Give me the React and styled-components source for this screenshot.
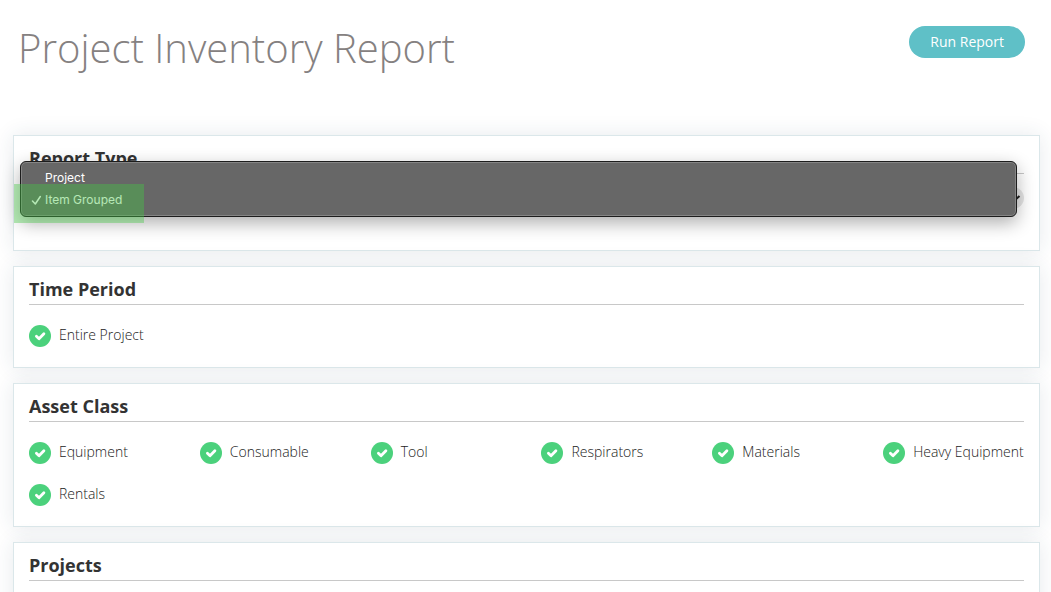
import React, { useState } from 'react';
import styled, { createGlobalStyle } from 'styled-components';

const reportTypes = ['Project', 'Item Grouped'];

const assetClasses = [
  'Equipment',
  'Consumable',
  'Tool',
  'Respirators',
  'Materials',
  'Heavy Equipment',
  'Rentals',
];

const CheckOption = ({ label }) => {
  const [checked, setChecked] = useState(true);

  return (
    <OptionLabel>
      <CheckCircle $checked={checked}>
        <CheckInput
          type="checkbox"
          checked={checked}
          onChange={(e) => setChecked(e.target.checked)}
        />
        <svg width="22" height="22" viewBox="0 0 22 22" fill="none" aria-hidden="true">
          <path
            d="M7.4 11.3L10 13.8L14.9 8.7"
            stroke="#fff"
            strokeWidth="2.8"
            strokeLinecap="round"
            strokeLinejoin="round"
          />
        </svg>
      </CheckCircle>
      <OptionText>{label}</OptionText>
    </OptionLabel>
  );
};

const App = () => {
  const [reportType, setReportType] = useState('Item Grouped');

  return (
    <>
      <GlobalStyle />
      <Page>
        <Header>
          <Title>Project Inventory Report</Title>
          <RunButton type="button">Run Report</RunButton>
        </Header>

        <Cards>
          <Card>
            <CardTitle id="report-type">Report Type</CardTitle>
            <SelectRow>
              <TypeSelect
                aria-labelledby="report-type"
                value={reportType}
                onChange={(e) => setReportType(e.target.value)}
              >
                {reportTypes.map((type) => (
                  <option key={type}>{type}</option>
                ))}
              </TypeSelect>
              <Arrow>
                <svg width="22" height="22" viewBox="0 0 22 22" fill="none" aria-hidden="true">
                  <path d="M7 9.5L12 14L17.5 9" stroke="#222" strokeWidth="2" />
                </svg>
              </Arrow>
            </SelectRow>
            <Menu role="listbox" aria-labelledby="report-type">
              {reportTypes.map((type) => (
                <MenuItem
                  key={type}
                  role="option"
                  aria-selected={type === reportType}
                  onClick={() => setReportType(type)}
                >
                  <MenuMark>
                    {type === reportType && (
                      <svg width="11" height="12" viewBox="0 0 11 12" fill="none" aria-hidden="true">
                        <path
                          d="M1.5 8L4.3 11L9.3 3.5"
                          stroke="#fff"
                          strokeWidth="1.5"
                          strokeLinecap="round"
                          strokeLinejoin="round"
                        />
                      </svg>
                    )}
                  </MenuMark>
                  {type}
                </MenuItem>
              ))}
            </Menu>
            <Highlight />
          </Card>

          <Card>
            <CardTitle>Time Period</CardTitle>
            <Options>
              <CheckOption label="Entire Project" />
            </Options>
          </Card>

          <Card>
            <CardTitle>Asset Class</CardTitle>
            <Options>
              {assetClasses.map((name) => (
                <CheckOption key={name} label={name} />
              ))}
            </Options>
          </Card>

          <Card>
            <CardTitle>Projects</CardTitle>
            <Options />
          </Card>
        </Cards>
      </Page>
    </>
  );
};

const GlobalStyle = createGlobalStyle`
  * {
    box-sizing: border-box;
  }

  body {
    margin: 0;
    background: #fff;
    font-family: 'Open Sans', sans-serif;
    color: #333;
  }
`;

const Page = styled.main`
  height: 100vh;
  overflow: hidden;
`;

const Header = styled.header`
  display: flex;
  justify-content: space-between;
  align-items: flex-start;
  padding: 20px 26px 59px 18px;
`;

const Title = styled.h1`
  margin: 0;
  font-size: 40px;
  line-height: 56px;
  font-weight: 300;
  color: #858181;
`;

const RunButton = styled.button`
  height: 32px;
  margin-top: 6px;
  padding: 0 21px 2px;
  border: 0;
  border-radius: 16px;
  background: #5fc0c7;
  color: #fff;
  font-family: inherit;
  font-size: 14px;
  font-weight: 500;
  cursor: pointer;
`;

const Cards = styled.div`
  display: flex;
  flex-direction: column;
  gap: 15px;
  padding: 0 11px 0 13px;
`;

const Card = styled.section`
  position: relative;
  padding: 0 15px;
  border: 1px solid #dbe7ea;
  background: #fff;
  box-shadow: 0 0 20px rgba(40, 60, 90, 0.11);
`;

const CardTitle = styled.h2`
  margin: 0;
  padding: 10px 0 3px;
  border-bottom: 1px solid #c8c8c8;
  font-size: 18px;
  line-height: 24px;
  font-weight: 700;
`;

const Options = styled.div`
  display: grid;
  grid-template-columns: repeat(6, 1fr);
  column-gap: 30px;
  min-height: 62px;
  padding: 10px 0;
`;

const OptionLabel = styled.label`
  display: flex;
  align-items: center;
  gap: 8px;
  height: 42px;
  cursor: pointer;
`;

const OptionText = styled.span`
  padding-bottom: 2px;
  font-size: 14px;
  font-weight: 300;
  line-height: 20px;
  white-space: nowrap;
  color: #222;
`;

const CheckCircle = styled.span`
  display: grid;
  flex: none;
  width: 22px;
  height: 22px;
  border-radius: 50%;
  background: ${({ $checked }) => ($checked ? '#4bd17c' : '#d5d5d5')};

  > * {
    grid-area: 1 / 1;
  }
`;

const CheckInput = styled.input`
  appearance: none;
  width: 22px;
  height: 22px;
  margin: 0;
  cursor: pointer;
`;

const SelectRow = styled.div`
  display: grid;
  align-items: center;
  height: 76px;
  padding: 8px 0 36px;

  > * {
    grid-area: 1 / 1;
  }
`;

const TypeSelect = styled.select`
  appearance: none;
  width: 100%;
  height: 32px;
  border: 0;
  background: transparent;
  font-family: inherit;
  font-size: 14px;
  font-weight: 300;
  color: #333;
`;

const Arrow = styled.span`
  display: flex;
  justify-self: end;
  border-radius: 50%;
  background: #e6e6e6;
  pointer-events: none;
`;

/* open list, floats over the select */
const Menu = styled.div`
  position: absolute;
  top: 25px;
  left: 6px;
  right: 22px;
  padding: 4px 5px 6px;
  border: 1px solid #1d1d1d;
  border-radius: 6px;
  background: #676767;
  box-shadow:
    inset 0 0 0 1px #858585,
    0 6px 18px rgba(0, 0, 0, 0.32);
`;

const MenuItem = styled.div`
  display: flex;
  align-items: center;
  height: 22px;
  padding-left: 5px;
  font-family: Inter, sans-serif;
  font-size: 12px;
  font-weight: 400;
  color: #fff;
  cursor: default;
`;

const MenuMark = styled.span`
  display: flex;
  width: 14px;
`;

const Highlight = styled.div`
  position: absolute;
  top: 48px;
  left: 0;
  width: 130px;
  height: 39px;
  background: rgba(70, 200, 70, 0.4);
  pointer-events: none;
`;

export default App;
